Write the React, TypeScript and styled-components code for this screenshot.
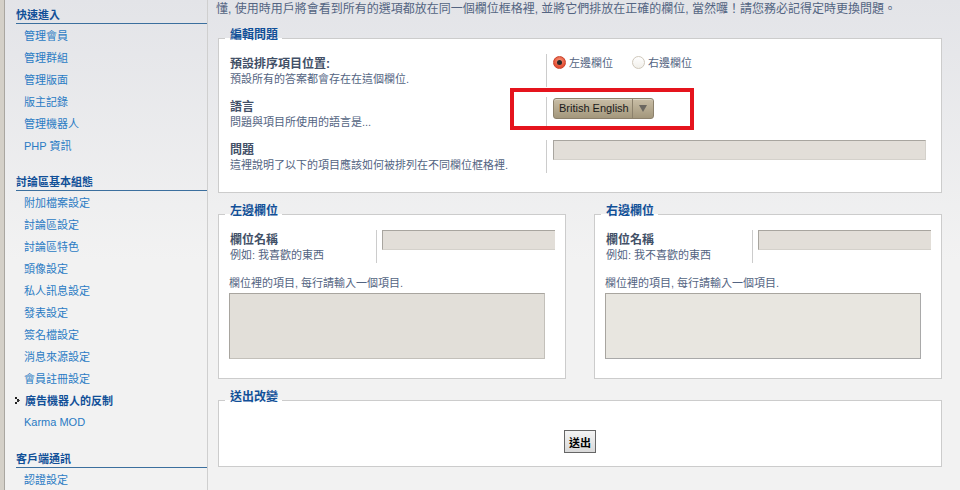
import React from 'react';
import styled, { createGlobalStyle } from 'styled-components';

const FONT = `"Liberation Sans", "Noto Sans CJK TC", Arial, sans-serif`;

const GlobalStyle = createGlobalStyle`
	html, body {
		margin: 0;
		padding: 0;
	}
	body {
		background: #f2f2f2;
		font-family: ${FONT};
	}
`;

const quickLinks = ['管理會員', '管理群組', '管理版面', '版主記錄', '管理機器人', 'PHP 資訊'];
const boardLinks = [
	'附加檔案設定',
	'討論區設定',
	'討論區特色',
	'頭像設定',
	'私人訊息設定',
	'發表設定',
	'簽名檔設定',
	'消息來源設定',
	'會員註冊設定',
	'廣告機器人的反制',
	'Karma MOD',
];
const clientLinks = ['認證設定'];
const ACTIVE = '廣告機器人的反制';

const Bullet = () => (
	<svg width="6" height="7" viewBox="0 0 6 7">
		<rect x="0" y="0" width="2" height="2" fill="#222" />
		<rect x="2" y="2" width="2" height="2" fill="#222" />
		<rect x="4" y="3" width="1" height="1" fill="#555" />
		<rect x="0" y="5" width="2" height="2" fill="#222" />
		<rect x="2" y="3" width="2" height="2" fill="#333" />
	</svg>
);

const MenuGroup = ({ title, items, first }: { title: string; items: string[]; first?: boolean }) => (
	<Group $first={first}>
		<GroupTitle>{title}</GroupTitle>
		<MenuList>
			{items.map((item) => (
				<MenuItem key={item} $active={item === ACTIVE}>
					{item === ACTIVE && <Bullet />}
					<span>{item}</span>
				</MenuItem>
			))}
		</MenuList>
	</Group>
);

const ColumnBox = ({ title, example }: { title: string; example: string }) => (
	<ColumnFieldset>
		<Legend>{title}</Legend>
		<Row>
			<Term $width={148}>
				<Label>欄位名稱</Label>
				<Explain>{example}</Explain>
			</Term>
			<Def $clip>
				<TextInput $clip readOnly />
			</Def>
		</Row>
		<Note>欄位裡的項目, 每行請輸入一個項目.</Note>
		<TextArea readOnly $light={title === '右邊欄位'} />
	</ColumnFieldset>
);

export default function App() {
	return (
		<Page>
			<GlobalStyle />
			<Edge />
			<Sidebar>
				<MenuGroup title="快速進入" items={quickLinks} first />
				<MenuGroup title="討論區基本組態" items={boardLinks} />
				<MenuGroup title="客戶端通訊" items={clientLinks} />
			</Sidebar>
			<Main>
				<Intro>
					懂, 使用時用戶將會看到所有的選項都放在同一個欄位框格裡, 並將它們排放在正確的欄位, 當然囉！請您務必記得定時更換問題。
				</Intro>

				<Fieldset>
					<Legend>編輯問題</Legend>
					<Row>
						<Term $width={318}>
							<Label>預設排序項目位置:</Label>
							<Explain>預設所有的答案都會存在在這個欄位.</Explain>
						</Term>
						<Def>
							<RadioGroup>
								<RadioOption>
									<Radio $checked />
									左邊欄位
								</RadioOption>
								<RadioOption>
									<Radio />
									右邊欄位
								</RadioOption>
							</RadioGroup>
						</Def>
					</Row>
					<Row>
						<Term $width={318}>
							<Label>語言</Label>
							<Explain>問題與項目所使用的語言是...</Explain>
						</Term>
						<Def>
							<Select>
								<SelectText>British English</SelectText>
								<SelectArrow>
									<Triangle />
								</SelectArrow>
							</Select>
							<Highlight />
						</Def>
					</Row>
					<Row>
						<Term $width={318}>
							<Label>問題</Label>
							<Explain>這裡說明了以下的項目應該如何被排列在不同欄位框格裡.</Explain>
						</Term>
						<Def>
							<TextInput readOnly />
						</Def>
					</Row>
				</Fieldset>

				<Columns>
					<ColumnBox title="左邊欄位" example="例如: 我喜歡的東西" />
					<ColumnBox title="右邊欄位" example="例如: 我不喜歡的東西" />
				</Columns>

				<SubmitFieldset>
					<Legend>送出改變</Legend>
					<SubmitButton type="button">送出</SubmitButton>
				</SubmitFieldset>
			</Main>
		</Page>
	);
}

const Page = styled.div`
	display: flex;
	width: 960px;
	height: 490px;
	overflow: hidden;
	background: linear-gradient(to bottom, #e3e4e8 0, #f2f2f2 260px);
	font-family: ${FONT};
`;

const Edge = styled.div`
	width: 4px;
	flex-shrink: 0;
	background: #d4d0c8;
	border-right: 1px solid #a9a6a0;
`;

const Sidebar = styled.nav`
	width: 203px;
	flex-shrink: 0;
	box-sizing: border-box;
	padding-top: 8px;
	border-right: 1px solid #cfcfcf;
`;

const Group = styled.div<{ $first?: boolean }>`
	margin-top: ${(p) => (p.$first ? 0 : 19)}px;
`;

const GroupTitle = styled.div`
	margin-left: 11px;
	padding-bottom: 1px;
	border-bottom: 1px solid #3b6f9e;
	font-size: 11px;
	line-height: 14px;
	font-weight: bold;
	color: #115098;
`;

const MenuList = styled.ul`
	margin: 0;
	padding: 0;
	list-style: none;
`;

const MenuItem = styled.li<{ $active?: boolean }>`
	display: flex;
	align-items: center;
	gap: 4px;
	height: 22px;
	padding-left: ${(p) => (p.$active ? 10 : 19)}px;
	font-size: 11px;
	font-weight: ${(p) => (p.$active ? 'bold' : 'normal')};
	color: ${(p) => (p.$active ? '#115098' : '#2a7bc4')};
	white-space: nowrap;
`;

const Main = styled.main`
	flex: 1;
	min-width: 0;
	padding: 1px 18px 0 8px;
`;

const Intro = styled.p`
	margin: 0;
	font-size: 12px;
	line-height: 16px;
	color: #536482;
	white-space: nowrap;
`;

const Fieldset = styled.fieldset`
	display: block;
	box-sizing: border-box;
	min-width: 0;
	margin: 11px 0 0 2px;
	padding: 6px 10px 19px;
	border: 1px solid #cccccc;
	background: #ffffff;
`;

const ColumnFieldset = styled(Fieldset)`
	width: 348px;
	margin: 0;
`;

const SubmitFieldset = styled(Fieldset)`
	display: flex;
	justify-content: center;
	padding: 20px 10px 13px;
`;

const Legend = styled.legend`
	margin-left: -4px;
	padding: 0 4px 6px 5px;
	font-size: 12px;
	line-height: 14px;
	font-weight: bold;
	color: #115098;
`;

const Columns = styled.div`
	display: flex;
	justify-content: space-between;
	align-items: flex-start;
	margin: 11px 0 0 2px;
`;

const Row = styled.div`
	display: flex;
	& + & {
		margin-top: 10px;
	}
`;

const Term = styled.div<{ $width: number }>`
	width: ${(p) => p.$width}px;
	flex-shrink: 0;
	box-sizing: border-box;
	padding: 2px 0 1px 1px;
	border-right: 1px solid #cccccc;
`;

const Label = styled.div`
	font-size: 12px;
	line-height: 16px;
	font-weight: bold;
	color: #425067;
`;

const Explain = styled.div`
	font-size: 11px;
	line-height: 14px;
	color: #536482;
	white-space: nowrap;
`;

const Def = styled.div<{ $clip?: boolean }>`
	position: relative;
	flex: 1;
	min-width: 0;
	padding: 0 ${(p) => (p.$clip ? 0 : 5)}px 0 ${(p) => (p.$clip ? 5 : 6)}px;
	overflow: ${(p) => (p.$clip ? 'hidden' : 'visible')};
`;

const RadioGroup = styled.div`
	display: flex;
	align-items: center;
	gap: 19px;
	height: 14px;
	margin-top: 1px;
`;

const RadioOption = styled.label`
	display: flex;
	align-items: center;
	gap: 3px;
	font-size: 11px;
	color: #536482;
`;

const Radio = styled.span<{ $checked?: boolean }>`
	position: relative;
	width: 13px;
	height: 13px;
	box-sizing: border-box;
	border-radius: 50%;
	border: 1px solid ${(p) => (p.$checked ? '#c8432c' : '#cfc8bb')};
	background: ${(p) =>
		p.$checked
			? 'radial-gradient(circle at 50% 35%, #f79a80 0, #e7553a 60%, #d54128 100%)'
			: 'linear-gradient(#ffffff, #f1efea)'};
	&::after {
		content: '';
		display: ${(p) => (p.$checked ? 'block' : 'none')};
		position: absolute;
		left: 3px;
		top: 3px;
		width: 5px;
		height: 5px;
		border-radius: 50%;
		background: #2b2b2b;
	}
`;

const Select = styled.div`
	display: inline-flex;
	height: 21px;
	margin-top: 1px;
	box-sizing: border-box;
	border: 1px solid #8c816c;
	border-radius: 3px;
	background: linear-gradient(#c9bea6, #a3977c);
	box-shadow: inset 0 1px 0 rgba(255, 255, 255, 0.35);
	font-size: 11px;
	color: #1b1b1b;
`;

const SelectText = styled.span`
	width: 78px;
	box-sizing: border-box;
	padding-left: 5px;
	line-height: 19px;
	white-space: nowrap;
`;

const SelectArrow = styled.span`
	display: flex;
	align-items: center;
	justify-content: center;
	width: 20px;
	border-left: 1px solid #8c816c;
`;

const Triangle = styled.span`
	width: 0;
	height: 0;
	border-left: 4px solid transparent;
	border-right: 4px solid transparent;
	border-top: 7px solid #6b6760;
`;

const Highlight = styled.div`
	position: absolute;
	left: -37px;
	top: -9px;
	width: 184px;
	height: 42px;
	box-sizing: border-box;
	border: 4px solid #e5141d;
	pointer-events: none;
`;

const TextInput = styled.input<{ $clip?: boolean }>`
	display: block;
	width: ${(p) => (p.$clip ? '200px' : '100%')};
	height: 20px;
	margin: 0;
	padding: 0;
	box-sizing: border-box;
	background: #e2ded8;
	border: 1px solid #d4d1cb;
	border-top-color: #a8a59f;
	border-left-color: #a8a59f;
	outline: none;
`;

const Note = styled.div`
	margin-top: 12px;
	font-size: 11px;
	line-height: 16px;
	color: #536482;
`;

const TextArea = styled.textarea<{ $light?: boolean }>`
	display: block;
	width: 316px;
	height: 66px;
	margin: 2px 0 0;
	padding: 0;
	box-sizing: border-box;
	resize: none;
	background: ${(p) => (p.$light ? '#e8e6e0' : '#e2dfd9')};
	border: 1px solid ${(p) => (p.$light ? '#a9a9a9' : '#c3c0ba')};
	border-top-color: #a8a59f;
	border-left-color: #a8a59f;
	outline: none;
`;

const SubmitButton = styled.button`
	width: 32px;
	height: 23px;
	padding: 0;
	box-sizing: border-box;
	border: 1px solid #666666;
	background: linear-gradient(#f4f4f4, #d9d9d9);
	font-family: ${FONT};
	font-size: 11px;
	font-weight: bold;
	color: #000000;
`;
